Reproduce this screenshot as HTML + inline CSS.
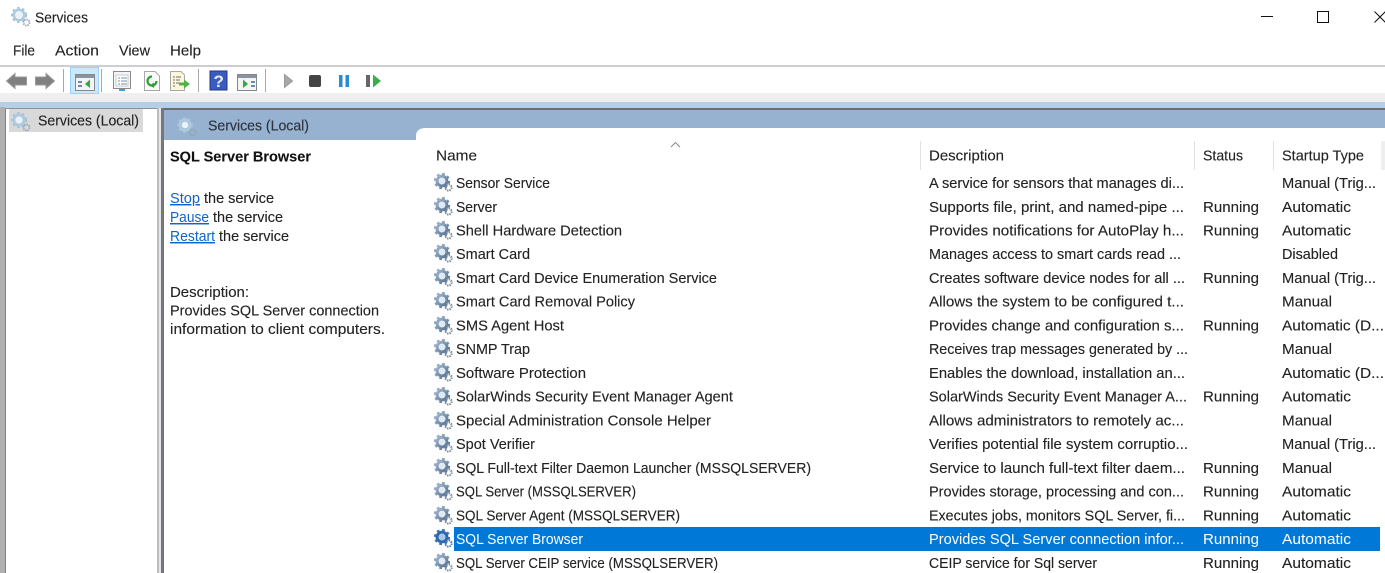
<!DOCTYPE html>
<html><head><meta charset="utf-8"><title>Services</title>
<style>
html,body{margin:0;padding:0;background:#fff;width:1385px;height:573px;overflow:hidden}
svg{display:block;filter:blur(.35px)}
text{font-family:"Liberation Sans",sans-serif;font-size:14.5px;fill:#222;stroke:#222;stroke-width:.12px}
</style></head><body>
<svg width="1385" height="573" viewBox="0 0 1385 573" xmlns="http://www.w3.org/2000/svg">
<defs>
<linearGradient id="g" x1="0" y1="0" x2="1" y2="1"><stop offset="0" stop-color="#9db4cc"/><stop offset="1" stop-color="#587490"/></linearGradient>
<g id="gear">
<circle cx="8" cy="8" r="6.9" fill="none" stroke="url(#g)" stroke-width="2.4" stroke-dasharray="2.7 2.7"/>
<circle cx="8" cy="8" r="4.9" fill="none" stroke="url(#g)" stroke-width="3"/>
<circle cx="8" cy="8" r="3.2" fill="#dfeaf4"/>
<circle cx="14.500" cy="14.500" r="3.100" fill="none" stroke="#74889c" stroke-width="2" stroke-dasharray="1.400 1"/>
<circle cx="14.500" cy="14.500" r="1.300" fill="#fff"/>
</g>
<g id="gearS">
<circle cx="8" cy="8" r="6.9" fill="none" stroke="#3f74b4" stroke-width="2.4" stroke-dasharray="2.7 2.7"/>
<circle cx="8" cy="8" r="4.9" fill="none" stroke="#2e68ad" stroke-width="3"/>
<circle cx="8" cy="8" r="3.2" fill="#a8c6e6"/>
<circle cx="14.500" cy="14.500" r="3.100" fill="none" stroke="#3f74b4" stroke-width="2" stroke-dasharray="1.400 1"/>
</g>
<g id="gearL">
<circle cx="8" cy="8" r="6.8" fill="none" stroke="#a5c1d8" stroke-width="2.400" stroke-dasharray="2.400 2.600"/>
<circle cx="8" cy="8" r="5.200" fill="none" stroke="#aecadf" stroke-width="2.600"/>
<circle cx="8" cy="8" r="3.400" fill="#e9f2f8"/>
<circle cx="15.500" cy="15.500" r="3" fill="none" stroke="#8fa0b0" stroke-width="1.800" stroke-dasharray="1.300 1"/>
</g>
</defs>

<!-- chrome -->
<rect x="0" y="65" width="1385" height="2" fill="#cdcdd2"/>
<rect x="0" y="93" width="1385" height="9" fill="#efefef"/>
<rect x="0" y="102" width="1385" height="6" fill="#b5cfe8"/>
<rect x="0" y="107" width="5" height="466" fill="#b0b0b0"/>
<rect x="5" y="108" width="1" height="465" fill="#808080"/>
<rect x="6" y="108" width="151" height="465" fill="#fff"/>
<rect x="5" y="108" width="152" height="1" fill="#909090"/>
<rect x="157" y="108" width="5" height="465" fill="#e4e8ee"/>
<rect x="157" y="108" width="2" height="465" fill="#bcbcbc"/>
<rect x="161" y="108" width="1224" height="2" fill="#6d6d6d"/>
<rect x="161" y="108" width="3" height="465" fill="#777"/>
<rect x="164" y="110" width="1221" height="30" fill="#97b2d0"/>
<path d="M416 141V136Q416 128 426 128H1385V141Z" fill="#fff"/>
<rect x="164" y="140" width="1221" height="433" fill="#fff"/>

<!-- title bar -->
<use href="#gearL" x="11" y="7"/>
<text x="35" y="22.500" textLength="53" lengthAdjust="spacingAndGlyphs">Services</text>
<rect x="1261" y="16" width="12" height="1" fill="#111"/>
<rect x="1317.500" y="11.500" width="11" height="11" fill="none" stroke="#111"/>
<path d="M1374.500 11.500L1385.500 22.500M1385.500 11.500L1374.500 22.500" stroke="#111" fill="none"/>

<!-- menu -->
<text x="13" y="55.500" textLength="22" lengthAdjust="spacingAndGlyphs">File</text>
<text x="55" y="55.500" textLength="44" lengthAdjust="spacingAndGlyphs">Action</text>
<text x="119" y="55.500" textLength="31" lengthAdjust="spacingAndGlyphs">View</text>
<text x="170" y="55.500" textLength="31" lengthAdjust="spacingAndGlyphs">Help</text>

<!-- toolbar -->
<path d="M6.500 81L15 73.500V77H26.500V85H15V88.500Z" fill="#808080" stroke="#9a9a9a"/>
<path d="M54.500 81L46 73.500V77H35.500V85H46V88.500Z" fill="#808080" stroke="#9a9a9a"/>
<rect x="63" y="69" width="1" height="23" fill="#a8a8a8"/>
<rect x="70.500" y="67.500" width="28" height="26" fill="#cce8ff" stroke="#99d1ff"/>
<rect x="75.500" y="74.500" width="19" height="16" fill="#f4f4f4" stroke="#808a90"/>
<rect x="76" y="75" width="18" height="3" fill="#8a949c"/>
<rect x="78" y="81" width="4" height="2" fill="#6e8aa8"/><rect x="78" y="85" width="4" height="2" fill="#6e8aa8"/>
<path d="M90 79.500V88L85 84Z" fill="#35a845"/>
<rect x="101" y="69" width="1" height="23" fill="#a8a8a8"/>
<rect x="113.500" y="71.500" width="17" height="17" fill="#f5f5f5" stroke="#8a8a8a"/>
<rect x="116" y="75" width="12" height="11" fill="#fff" stroke="#b0b8c0" stroke-width=".7"/>
<path d="M118 78h2M121 78h6M118 81h2M121 81h6M118 84h2M121 84h6" stroke="#7c90a8"/>
<rect x="119" y="89" width="6" height="2" fill="#3aa0dc"/>
<path d="M144.500 71.500H155L159.500 76V90.500H144.500Z" fill="#fbfbfb" stroke="#a8a8a8"/>
<path d="M156.500 81A4.500 4.500 0 1 1 152 76.500" fill="none" stroke="#2e9f3a" stroke-width="2.200"/>
<path d="M150 74L154 76.500L150 79.500Z" fill="#2e9f3a" transform="rotate(180 152 81)"/>
<path d="M170.500 71.500H181L184.500 75V90.500H170.500Z" fill="#fbf6dc" stroke="#a8a8a8"/>
<path d="M173 77h2M176 77h5M173 80h2M176 80h4M173 83h2M176 83h3M173 86h2" stroke="#6f6f6f"/>
<path d="M179 82.500h5V79.500L190 84L184 88.500V85.500H179Z" fill="#4fb34a"/>
<rect x="198" y="69" width="1" height="23" fill="#a8a8a8"/>
<rect x="210" y="71" width="17" height="19" fill="#3a5cc0" stroke="#23367f"/>
<text x="213.500" y="87" style="font-size:17px;font-weight:bold;fill:#e8eeff;stroke:none">?</text>
<rect x="237.500" y="74.500" width="19" height="16" fill="#f4f4f4" stroke="#808a90"/>
<rect x="238" y="75" width="18" height="3" fill="#8a949c"/>
<path d="M243 79.500V88L248 84Z" fill="#35a845"/>
<rect x="251" y="81" width="4" height="2" fill="#6e8aa8"/><rect x="251" y="85" width="4" height="2" fill="#6e8aa8"/>
<rect x="265" y="69" width="1" height="23" fill="#a8a8a8"/>
<path d="M284.500 74.500L292.500 81L284.500 87.500Z" fill="#a8a8a8" stroke="#9a9a9a"/>
<rect x="309" y="75" width="12" height="12" rx="2" fill="#444"/>
<rect x="339" y="75" width="3.500" height="12" fill="#2a8ad4"/>
<rect x="345.500" y="75" width="3.500" height="12" fill="#2a8ad4"/>
<rect x="366" y="75" width="4" height="12" fill="#666"/>
<path d="M373 74.500L381 81L373 87.500Z" fill="#35b04a"/>

<!-- tree -->
<rect x="9" y="109" width="134" height="23" fill="#d9d9d9"/>
<use href="#gearL" x="11" y="112"/>
<text x="38" y="125.500" textLength="101" lengthAdjust="spacingAndGlyphs">Services (Local)</text>

<!-- header -->
<use href="#gearL" x="177" y="117"/>
<text x="208" y="130.500" textLength="101" lengthAdjust="spacingAndGlyphs" style="fill:#2b3440">Services (Local)</text>

<!-- description pane -->
<text x="170" y="161.500" textLength="141" lengthAdjust="spacingAndGlyphs" style="font-weight:bold;fill:#111">SQL Server Browser</text>
<text x="170" y="203" textLength="30" lengthAdjust="spacingAndGlyphs" style="fill:#0a66cc;stroke:none" text-decoration="underline">Stop</text>
<text x="204" y="203" textLength="70" lengthAdjust="spacingAndGlyphs">the service</text>
<text x="170" y="222" textLength="39" lengthAdjust="spacingAndGlyphs" style="fill:#0a66cc;stroke:none" text-decoration="underline">Pause</text>
<text x="213" y="222" textLength="70" lengthAdjust="spacingAndGlyphs">the service</text>
<text x="170" y="241" textLength="45" lengthAdjust="spacingAndGlyphs" style="fill:#0a66cc;stroke:none" text-decoration="underline">Restart</text>
<text x="219" y="241" textLength="70" lengthAdjust="spacingAndGlyphs">the service</text>
<text x="170" y="297" textLength="79" lengthAdjust="spacingAndGlyphs">Description:</text>
<text x="170" y="315.500" textLength="209" lengthAdjust="spacingAndGlyphs">Provides SQL Server connection</text>
<text x="170" y="334" textLength="215" lengthAdjust="spacingAndGlyphs">information to client computers.</text>

<!-- list header -->
<path d="M671 147L675.500 142.500L680 147" fill="none" stroke="#8a8a8a"/>
<rect x="920" y="141" width="1" height="29" fill="#e3e3e3"/>
<rect x="1194" y="141" width="1" height="29" fill="#e3e3e3"/>
<rect x="1273" y="141" width="1" height="29" fill="#e3e3e3"/>
<rect x="1381" y="141" width="4" height="29" fill="#efefef"/>
<text x="436" y="160.500" textLength="41" lengthAdjust="spacingAndGlyphs">Name</text>
<text x="929" y="160.500" textLength="75" lengthAdjust="spacingAndGlyphs">Description</text>
<text x="1203" y="160.500" textLength="40" lengthAdjust="spacingAndGlyphs">Status</text>
<text x="1282" y="160.500" textLength="82" lengthAdjust="spacingAndGlyphs">Startup Type</text>

<!-- selection -->
<rect x="454" y="527" width="926" height="24" fill="#0078d7"/>

<!-- gears -->
<use href="#gear" x="434" y="173"/>
<use href="#gear" x="434" y="197"/>
<use href="#gear" x="434" y="221"/>
<use href="#gear" x="434" y="244"/>
<use href="#gear" x="434" y="268"/>
<use href="#gear" x="434" y="292"/>
<use href="#gear" x="434" y="316"/>
<use href="#gear" x="434" y="339"/>
<use href="#gear" x="434" y="363"/>
<use href="#gear" x="434" y="387"/>
<use href="#gear" x="434" y="411"/>
<use href="#gear" x="434" y="434"/>
<use href="#gear" x="434" y="458"/>
<use href="#gear" x="434" y="482"/>
<use href="#gear" x="434" y="506"/>
<use href="#gearS" x="434" y="529"/>
<use href="#gear" x="434" y="553"/>

<!-- names -->
<text x="456" y="188" textLength="94" lengthAdjust="spacingAndGlyphs">Sensor Service</text>
<text x="456" y="212" textLength="41" lengthAdjust="spacingAndGlyphs">Server</text>
<text x="456" y="235.500" textLength="166" lengthAdjust="spacingAndGlyphs">Shell Hardware Detection</text>
<text x="456" y="259" textLength="74" lengthAdjust="spacingAndGlyphs">Smart Card</text>
<text x="456" y="283" textLength="261" lengthAdjust="spacingAndGlyphs">Smart Card Device Enumeration Service</text>
<text x="456" y="306.500" textLength="179" lengthAdjust="spacingAndGlyphs">Smart Card Removal Policy</text>
<text x="456" y="330.500" textLength="108" lengthAdjust="spacingAndGlyphs">SMS Agent Host</text>
<text x="456" y="354" textLength="74" lengthAdjust="spacingAndGlyphs">SNMP Trap</text>
<text x="456" y="378" textLength="130" lengthAdjust="spacingAndGlyphs">Software Protection</text>
<text x="456" y="401.500" textLength="277" lengthAdjust="spacingAndGlyphs">SolarWinds Security Event Manager Agent</text>
<text x="456" y="425.500" textLength="255" lengthAdjust="spacingAndGlyphs">Special Administration Console Helper</text>
<text x="456" y="449" textLength="79" lengthAdjust="spacingAndGlyphs">Spot Verifier</text>
<text x="456" y="473" textLength="355" lengthAdjust="spacingAndGlyphs">SQL Full-text Filter Daemon Launcher (MSSQLSERVER)</text>
<text x="456" y="496.500" textLength="180" lengthAdjust="spacingAndGlyphs">SQL Server (MSSQLSERVER)</text>
<text x="456" y="520.500" textLength="224" lengthAdjust="spacingAndGlyphs">SQL Server Agent (MSSQLSERVER)</text>
<text x="456" y="544" textLength="127" lengthAdjust="spacingAndGlyphs" style="fill:#fff;stroke:none">SQL Server Browser</text>
<text x="456" y="568" textLength="262" lengthAdjust="spacingAndGlyphs">SQL Server CEIP service (MSSQLSERVER)</text>

<!-- descriptions -->
<text x="929" y="188" textLength="255" lengthAdjust="spacingAndGlyphs">A service for sensors that manages di...</text>
<text x="929" y="212" textLength="255" lengthAdjust="spacingAndGlyphs">Supports file, print, and named-pipe ...</text>
<text x="929" y="235.500" textLength="255" lengthAdjust="spacingAndGlyphs">Provides notifications for AutoPlay h...</text>
<text x="929" y="259" textLength="252" lengthAdjust="spacingAndGlyphs">Manages access to smart cards read ...</text>
<text x="929" y="283" textLength="256" lengthAdjust="spacingAndGlyphs">Creates software device nodes for all ...</text>
<text x="929" y="306.500" textLength="255" lengthAdjust="spacingAndGlyphs">Allows the system to be configured t...</text>
<text x="929" y="330.500" textLength="255" lengthAdjust="spacingAndGlyphs">Provides change and configuration s...</text>
<text x="929" y="354" textLength="259" lengthAdjust="spacingAndGlyphs">Receives trap messages generated by ...</text>
<text x="929" y="378" textLength="256" lengthAdjust="spacingAndGlyphs">Enables the download, installation an...</text>
<text x="929" y="401.500" textLength="258" lengthAdjust="spacingAndGlyphs">SolarWinds Security Event Manager A...</text>
<text x="929" y="425.500" textLength="255" lengthAdjust="spacingAndGlyphs">Allows administrators to remotely ac...</text>
<text x="929" y="449" textLength="259" lengthAdjust="spacingAndGlyphs">Verifies potential file system corruptio...</text>
<text x="929" y="473" textLength="256" lengthAdjust="spacingAndGlyphs">Service to launch full-text filter daem...</text>
<text x="929" y="496.500" textLength="255" lengthAdjust="spacingAndGlyphs">Provides storage, processing and con...</text>
<text x="929" y="520.500" textLength="256" lengthAdjust="spacingAndGlyphs">Executes jobs, monitors SQL Server, fi...</text>
<text x="929" y="544" textLength="255" lengthAdjust="spacingAndGlyphs" style="fill:#fff;stroke:none">Provides SQL Server connection infor...</text>
<text x="929" y="568" textLength="168" lengthAdjust="spacingAndGlyphs">CEIP service for Sql server</text>

<!-- status -->
<text x="1203" y="212" textLength="56" lengthAdjust="spacingAndGlyphs">Running</text>
<text x="1203" y="235.500" textLength="56" lengthAdjust="spacingAndGlyphs">Running</text>
<text x="1203" y="283" textLength="56" lengthAdjust="spacingAndGlyphs">Running</text>
<text x="1203" y="330.500" textLength="56" lengthAdjust="spacingAndGlyphs">Running</text>
<text x="1203" y="401.500" textLength="56" lengthAdjust="spacingAndGlyphs">Running</text>
<text x="1203" y="473" textLength="56" lengthAdjust="spacingAndGlyphs">Running</text>
<text x="1203" y="496.500" textLength="56" lengthAdjust="spacingAndGlyphs">Running</text>
<text x="1203" y="520.500" textLength="56" lengthAdjust="spacingAndGlyphs">Running</text>
<text x="1203" y="544" textLength="56" lengthAdjust="spacingAndGlyphs" style="fill:#fff;stroke:none">Running</text>
<text x="1203" y="568" textLength="56" lengthAdjust="spacingAndGlyphs">Running</text>

<!-- startup -->
<text x="1282" y="188" textLength="94" lengthAdjust="spacingAndGlyphs">Manual (Trig...</text>
<text x="1282" y="212" textLength="69" lengthAdjust="spacingAndGlyphs">Automatic</text>
<text x="1282" y="235.500" textLength="69" lengthAdjust="spacingAndGlyphs">Automatic</text>
<text x="1282" y="259" textLength="56" lengthAdjust="spacingAndGlyphs">Disabled</text>
<text x="1282" y="283" textLength="94" lengthAdjust="spacingAndGlyphs">Manual (Trig...</text>
<text x="1282" y="306.500" textLength="50" lengthAdjust="spacingAndGlyphs">Manual</text>
<text x="1282" y="330.500" textLength="102" lengthAdjust="spacingAndGlyphs">Automatic (D...</text>
<text x="1282" y="354" textLength="50" lengthAdjust="spacingAndGlyphs">Manual</text>
<text x="1282" y="378" textLength="102" lengthAdjust="spacingAndGlyphs">Automatic (D...</text>
<text x="1282" y="401.500" textLength="69" lengthAdjust="spacingAndGlyphs">Automatic</text>
<text x="1282" y="425.500" textLength="50" lengthAdjust="spacingAndGlyphs">Manual</text>
<text x="1282" y="449" textLength="94" lengthAdjust="spacingAndGlyphs">Manual (Trig...</text>
<text x="1282" y="473" textLength="50" lengthAdjust="spacingAndGlyphs">Manual</text>
<text x="1282" y="496.500" textLength="69" lengthAdjust="spacingAndGlyphs">Automatic</text>
<text x="1282" y="520.500" textLength="69" lengthAdjust="spacingAndGlyphs">Automatic</text>
<text x="1282" y="544" textLength="69" lengthAdjust="spacingAndGlyphs" style="fill:#fff;stroke:none">Automatic</text>
<text x="1282" y="568" textLength="69" lengthAdjust="spacingAndGlyphs">Automatic</text>
</svg>
</body></html>
